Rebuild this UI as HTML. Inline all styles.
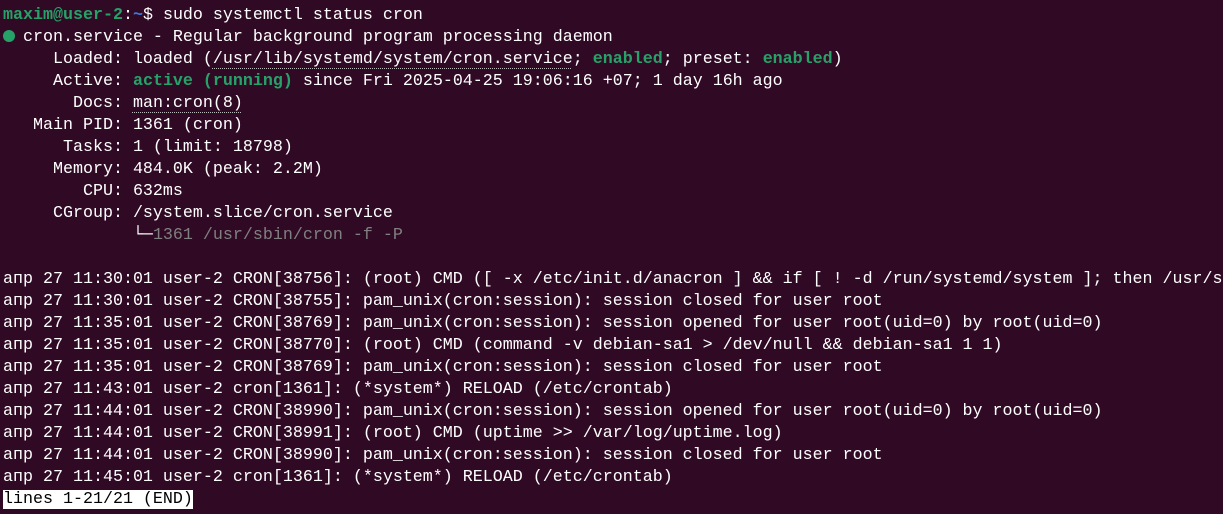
<!DOCTYPE html>
<html><head><meta charset="utf-8"><style>
html,body{margin:0;padding:0;background:#300a24;width:1223px;height:514px;overflow:hidden}
pre{margin:0;position:absolute;left:3px;top:5px;font-family:"Liberation Mono",monospace;font-size:16.67px;line-height:22px;color:#ffffff;white-space:pre}
.g{color:#26a269;font-weight:bold}
.b{color:#3b78d8;font-weight:bold}
.gr{color:#808080}
.u{text-decoration:underline dotted #bbb;text-decoration-thickness:1px;text-underline-offset:5px}
.dot{display:inline-block;width:12px;height:12px;border-radius:50%;background:#26a269;margin-left:0px;margin-right:-2px;vertical-align:-1px}
.inv{background:#ffffff;color:#000;}
</style></head><body>
<pre><span class="g">maxim@user-2</span>:<span class="b">~</span>$ sudo systemctl status cron
<span class="dot"></span> cron.service - Regular background program processing daemon
     Loaded: loaded (<span class="u">/usr/lib/systemd/system/cron.service</span>; <span class="g">enabled</span>; preset: <span class="g">enabled</span>)
     Active: <span class="g">active (running)</span> since Fri 2025-04-25 19:06:16 +07; 1 day 16h ago
       Docs: <span class="u">man:cron(8)</span>
   Main PID: 1361 (cron)
      Tasks: 1 (limit: 18798)
     Memory: 484.0K (peak: 2.2M)
        CPU: 632ms
     CGroup: /system.slice/cron.service
             └─<span class="gr">1361 /usr/sbin/cron -f -P</span>

апр 27 11:30:01 user-2 CRON[38756]: (root) CMD ([ -x /etc/init.d/anacron ] &amp;&amp; if [ ! -d /run/systemd/system ]; then /usr/s
апр 27 11:30:01 user-2 CRON[38755]: pam_unix(cron:session): session closed for user root
апр 27 11:35:01 user-2 CRON[38769]: pam_unix(cron:session): session opened for user root(uid=0) by root(uid=0)
апр 27 11:35:01 user-2 CRON[38770]: (root) CMD (command -v debian-sa1 &gt; /dev/null &amp;&amp; debian-sa1 1 1)
апр 27 11:35:01 user-2 CRON[38769]: pam_unix(cron:session): session closed for user root
апр 27 11:43:01 user-2 cron[1361]: (*system*) RELOAD (/etc/crontab)
апр 27 11:44:01 user-2 CRON[38990]: pam_unix(cron:session): session opened for user root(uid=0) by root(uid=0)
апр 27 11:44:01 user-2 CRON[38991]: (root) CMD (uptime &gt;&gt; /var/log/uptime.log)
апр 27 11:44:01 user-2 CRON[38990]: pam_unix(cron:session): session closed for user root
апр 27 11:45:01 user-2 cron[1361]: (*system*) RELOAD (/etc/crontab)
<span class="inv">lines 1-21/21 (END)</span></pre>
</body></html>
